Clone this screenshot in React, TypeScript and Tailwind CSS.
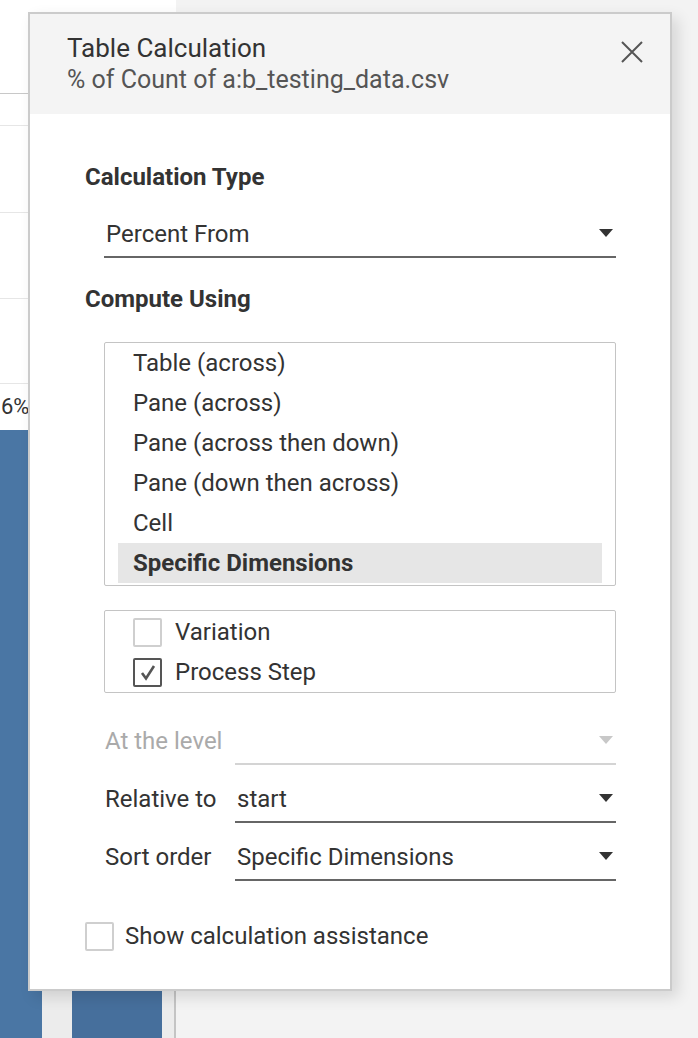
import { useState } from "react"

function Caret({ light }: { light?: boolean }) {
    return (
        <svg width="14" height="8" viewBox="0 0 14 8" className="shrink-0">
            <path d="M0 0 L14 0 L7 8 Z" fill={light ? "#c8c8c8" : "#333"} />
        </svg>
    )
}

function Select({ value, light }: { value: string; light?: boolean }) {
    return (
        <div className={`h-[42px] flex-1 flex items-end justify-between pl-[2px] pb-[8px] pr-[3px] border-b-2 ${light ? "border-[#d4d4d4]" : "border-[#666]"}`}>
            <span className="leading-[28px] text-[24px] text-[#333]">{value}</span>
            <div className="mb-[11px]"><Caret light={light} /></div>
        </div>
    )
}

function Check({ on }: { on?: boolean }) {
    return (
        <div className={`w-[29px] h-[29px] shrink-0 rounded-[2px] border-2 flex items-center justify-center bg-white ${on ? "border-[#555]" : "border-[#cfcfcf]"}`}>
            {on && (
                <svg width="18" height="18" viewBox="0 0 18 18">
                    <path d="M3 10 L7 15.5 L15 3" stroke="#555" strokeWidth="2.6" fill="none" />
                </svg>
            )}
        </div>
    )
}

function Row({ label, value, light }: { label: string; value: string; light?: boolean }) {
    return (
        <div className="flex items-end">
            <div className={`w-[131px] pl-[1px] pb-[10px] leading-[28px] text-[24px] ${light ? "text-[#aaa]" : "text-[#333]"}`}>{label}</div>
            <Select value={value} light={light} />
        </div>
    )
}

const options = ["Table (across)", "Pane (across)", "Pane (across then down)", "Pane (down then across)", "Cell", "Specific Dimensions"]

function Background() {
    return (
        <div className="absolute inset-0 flex bg-[#f3f3f3]">
            <div className="w-[176px] flex flex-col bg-white">
                <div className="h-[94px] border-b border-[#c8c8c8]"></div>
                <div className="h-[32px] border-b border-[#e6e6e6]"></div>
                <div className="h-[87px] border-b border-[#e6e6e6]"></div>
                <div className="h-[86px] border-b border-[#e6e6e6]"></div>
                <div className="h-[85px] border-b border-[#e6e6e6]"></div>
                <div className="h-[46px] flex items-center">
                    <span className="ml-[1px] text-[22px] text-[#333] leading-none">6%</span>
                </div>
                <div className="flex-1 flex gap-[30px] bg-[#ececec] border-r-2 border-[#c4c4c4]">
                    <div className="w-[42px] bg-[#4a76a4]"></div>
                    <div className="w-[90px] mt-[420px] bg-[#466f9c]"></div>
                </div>
            </div>
        </div>
    )
}

export default function App() {
    const [selected] = useState("Specific Dimensions")
    return (
        <div className="relative w-[698px] h-[1038px] overflow-hidden font-[Roboto,'Liberation_Sans',sans-serif] text-[#333]">
            <Background />
            <div className="absolute left-[28px] top-[12px] w-[644px] h-[979px] bg-white border-2 border-[#cbcbcb] shadow-[6px_6px_14px_rgba(0,0,0,0.12)] flex flex-col">
                <div className="h-[100px] bg-[#f4f4f4] flex justify-between pl-[37px] pr-[27px] pt-[19px]">
                    <div className="flex flex-col">
                        <span className="text-[26px] leading-[30px] text-[#333]">Table Calculation</span>
                        <span className="text-[25px] leading-[30px] mt-[2px] text-[#555]">% of Count of a:b_testing_data.csv</span>
                    </div>
                    <svg width="22" height="22" viewBox="0 0 22 22" className="mt-[8px]">
                        <path d="M1 1 L21 21 M21 1 L1 21" stroke="#555" strokeWidth="2" />
                    </svg>
                </div>

                <div className="flex flex-col pl-[55px] pr-[54px] pt-[49px]">
                    <div className="text-[24px] leading-[28px] font-bold">Calculation Type</div>
                    <div className="ml-[19px] mt-[25px] flex">
                        <Select value="Percent From" />
                    </div>

                    <div className="mt-[27px] text-[24px] leading-[28px] font-bold">Compute Using</div>
                    <div className="ml-[19px] mt-[29px] h-[244px] border border-[#c4c4c4] rounded-[2px] px-[13px]">
                        {options.map(o => (
                            <div key={o} className={`h-[40px] flex items-center pl-[15px] text-[24px] ${o === selected ? "font-bold bg-[#e6e6e6]" : ""}`}>{o}</div>
                        ))}
                    </div>

                    <div className="ml-[19px] mt-[24px] h-[83px] border border-[#c4c4c4] rounded-[2px] pl-[28px] pt-px">
                        <div className="h-[40px] flex items-center gap-[13px] text-[24px]"><Check /><span>Variation</span></div>
                        <div className="h-[40px] flex items-center gap-[13px] text-[24px]"><Check on /><span>Process Step</span></div>
                    </div>

                    <div className="ml-[19px] mt-[30px] flex flex-col gap-[16px]">
                        <Row label="At the level" value="" light />
                        <Row label="Relative to" value="start" />
                        <Row label="Sort order" value="Specific Dimensions" />
                    </div>

                    <div className="mt-[37px] flex items-center gap-[11px] text-[24px]">
                        <Check /><span>Show calculation assistance</span>
                    </div>
                </div>
            </div>
        </div>
    )
}
